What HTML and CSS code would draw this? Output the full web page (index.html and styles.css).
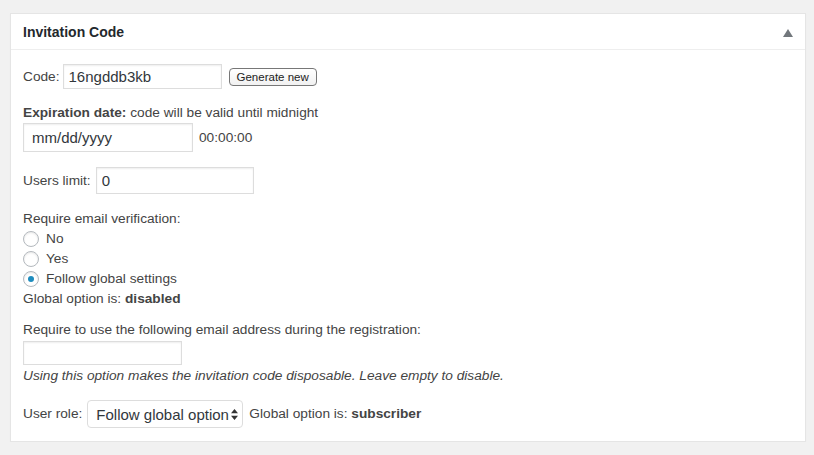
FILE: index.html
```html
<!DOCTYPE html>
<html lang="en">
<head>
  <meta charset="UTF-8">
  <title>Invitation Code</title>
  <link rel="stylesheet" href="styles.css">
</head>
<body>
  <div class="postbox">
    <div class="postbox-header">
      <h2>Invitation Code</h2>
      <span class="toggle-arrow">
        <svg width="10" height="8" viewBox="0 0 10 8"><path d="M5 0 L10 8 L0 8 Z" fill="#72777c"/></svg>
      </span>
    </div>
    <div class="inside">
      <div class="row row-code">
        <label for="code">Code:</label>
        <input type="text" id="code" class="code-input" value="16ngddb3kb">
        <button class="btn-small">Generate new</button>
      </div>

      <p class="line expiration"><b>Expiration date:</b> code will be valid until midnight</p>
      <div class="row row-date">
        <input type="text" class="date-input" placeholder="mm/dd/yyyy">
        <span class="time">00:00:00</span>
      </div>

      <div class="row row-limit">
        <label for="limit">Users limit:</label>
        <input type="text" id="limit" class="limit-input" value="0">
      </div>

      <p class="line verify-title">Require email verification:</p>
      <label class="radio-line"><span class="radio"></span>No</label>
      <label class="radio-line"><span class="radio"></span>Yes</label>
      <label class="radio-line"><span class="radio checked"></span>Follow global settings</label>
      <p class="line">Global option is: <b>disabled</b></p>

      <p class="line email-title">Require to use the following email address during the registration:</p>
      <input type="text" class="email-input">
      <p class="line note"><i>Using this option makes the invitation code disposable. Leave empty to disable.</i></p>

      <div class="row row-role">
        <label for="role">User role:</label>
        <div class="select-wrap">
          <select id="role" class="role-select">
            <option>Follow global option</option>
          </select>
          <svg class="select-arrows" width="7" height="11" viewBox="0 0 7 11"><path d="M3.5 0 L7 4.2 L0 4.2 Z M3.5 11 L7 6.8 L0 6.8 Z" fill="#333"/></svg>
        </div>
        <span class="role-note">Global option is: <b>subscriber</b></span>
      </div>
    </div>
  </div>
</body>
</html>
```

FILE: styles.css
```css
/* Base */
* {
  box-sizing: border-box;
  margin: 0;
  padding: 0;
}
body {
  background-color: #f1f1f1;
  color: #444;
  font-family: "Liberation Sans", Arial, sans-serif;
  font-size: 13.7px;
  line-height: 20px;
  padding: 13px 9px 0 10px;
}
/* Metabox */
.postbox {
  width: 796px;
  background-color: #fff;
  border: 1px solid #e5e5e5;
  box-shadow: 0 1px 1px rgba(0, 0, 0, 0.04);
}
.postbox-header {
  display: flex;
  align-items: center;
  justify-content: space-between;
  height: 36px;
  padding: 0 12px;
  border-bottom: 1px solid #eee;
}
.postbox-header h2 {
  font-size: 14px;
  font-weight: bold;
  color: #23282d;
  line-height: 20px;
}
.toggle-arrow {
  display: flex;
  margin-top: 2px;
}
.inside {
  padding: 14px 12px 13px;
}
/* Rows */
.row {
  display: flex;
  align-items: center;
}
.row label {
  margin-right: 5px;
}
.line {
  line-height: 20px;
}
b {
  font-weight: bold;
}
input[type="text"] {
  font-family: inherit;
  font-size: 15px;
  color: #32373c;
  border: 1px solid #ddd;
  box-shadow: inset 0 1px 2px rgba(0, 0, 0, 0.07);
  padding: 0 5px;
  outline: none;
  background-color: #fff;
}
.row-code label {
  margin-right: 3px;
}
.code-input {
  width: 159px;
  height: 25px;
}
.btn-small {
  margin-left: 7px;
  height: 18px;
  padding: 0 7px;
  font-family: inherit;
  font-size: 11.5px;
  color: #222;
  background: linear-gradient(#fff, #f1f1f1);
  border: 1px solid #777;
  border-radius: 4px;
}
.expiration {
  margin-top: 14px;
}
.date-input {
  width: 170px;
  height: 29px;
  padding-left: 8px !important;
}
.date-input::placeholder {
  color: #32373c;
}
.time {
  margin-left: 6px;
}
.row-limit {
  margin-top: 15px;
}
.limit-input {
  width: 158px;
  height: 27px;
}
.verify-title {
  margin-top: 15px;
}
.radio-line {
  display: flex;
  align-items: center;
  height: 20px;
}
.radio {
  width: 16px;
  height: 16px;
  border: 1px solid #b4b9be;
  border-radius: 50%;
  margin-right: 7px;
  box-shadow: inset 0 1px 2px rgba(0, 0, 0, 0.1);
  display: flex;
  align-items: center;
  justify-content: center;
}
.radio.checked::before {
  content: "";
  width: 6px;
  height: 6px;
  border-radius: 50%;
  background-color: #1e8cbe;
}
.email-title {
  margin-top: 11px;
}
.email-input {
  display: block;
  margin-top: 1px;
  width: 159px;
  height: 24px;
}
.note {
  margin-top: 1px;
}
.row-role {
  margin-top: 14px;
}
.row-role label {
  margin-right: 5px;
}
.select-wrap {
  position: relative;
}
.role-select {
  appearance: none;
  -webkit-appearance: none;
  width: 156px;
  height: 28px;
  padding: 0 10px 0 8px;
  font-family: inherit;
  font-size: 15px;
  color: #32373c;
  background-color: #fff;
  border: 1px solid #ddd;
  border-radius: 4px;
  outline: none;
}
.select-arrows {
  position: absolute;
  right: 5px;
  top: 9px;
}
.role-note {
  margin-left: 6px;
}
```
